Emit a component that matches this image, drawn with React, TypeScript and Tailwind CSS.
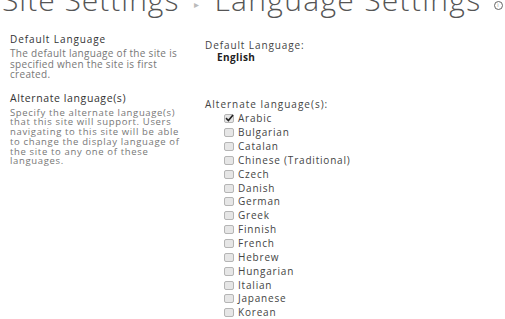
import React from 'react';

// Language settings page (SharePoint style)

const LANGUAGES = [
  'Arabic',
  'Bulgarian',
  'Catalan',
  'Chinese (Traditional)',
  'Czech',
  'Danish',
  'German',
  'Greek',
  'Finnish',
  'French',
  'Hebrew',
  'Hungarian',
  'Italian',
  'Japanese',
  'Korean',
];

function Checkbox({ checked }: { checked?: boolean }) {
  return (
    <span className="relative flex h-[9px] w-[10px] shrink-0 items-center justify-center rounded-[2px] border border-[#b5b5b5] bg-[#e6e6e6]">
      {checked && (
        <svg width="9" height="8" viewBox="0 0 9 8" className="absolute -top-[1px] left-0">
          <path d="M1 4.2 L3.4 6.5 L8 1" stroke="#222" strokeWidth="1.6" fill="none" />
        </svg>
      )}
    </span>
  );
}

export default function App() {
  return (
    <div
      className="h-[319px] w-[505px] overflow-hidden bg-white text-[#444]"
      style={{ fontFamily: '"Open Sans", "Noto Sans", sans-serif' }}
    >
      {/* Title */}
      <div className="-mt-[18px] flex h-[36px] items-center whitespace-nowrap pl-[2px] text-[30px] font-light leading-[36px] text-[#555]">
        <span className="shrink-0 tracking-[1px]">Site Settings</span>
        <span className="relative top-[4px] mx-[15px] shrink-0 text-[10px] leading-none text-[#bbb]">▸</span>
        <span className="shrink-0 tracking-[1.3px]">Language Settings</span>
        <span className="relative top-[5px] ml-[12px] flex h-[9px] w-[9px] shrink-0 items-center justify-center rounded-full border border-[#666] text-[6px] leading-none">i</span>
      </div>

      <div className="mt-[15px] flex">
        {/* Left column */}
        <div className="w-[192px] shrink-0 pl-[10px] pr-[8px]">
          <div className="text-[10px] leading-[12px] tracking-[0.9px] text-[#333]">Default Language</div>
          <p className="mt-[3px] text-[10px] leading-[10.5px] tracking-[0.3px] text-[#777]">
            The default language of the site is specified when the site is first created.
          </p>
          <div className="mt-[12px] text-[10.5px] leading-[13px] tracking-[0.6px] text-[#333]">Alternate language(s)</div>
          <p className="mt-[3px] text-[9.5px] leading-[9.8px] tracking-[0.65px] text-[#777]">
            Specify the alternate language(s) that this site will support. Users navigating to this site will be able to change the display language of the site to any one of these languages.
          </p>
        </div>

        {/* Right column */}
        <div className="flex-1 pl-[13px] pt-[6px]">
          <div className="text-[10px] leading-[12px] tracking-[0.9px] text-[#444]">Default Language:</div>
          <div className="pl-[12px] text-[10px] font-bold leading-[12px] tracking-[0.4px] text-[#222]">English</div>

          <div className="mt-[35px] text-[10px] leading-[12px] tracking-[1px] text-[#444]">Alternate language(s):</div>
          <ul className="mt-[2px] pl-[19px]">
            {LANGUAGES.map((lang, i) => (
              <li key={lang} className="flex h-[13.85px] items-center gap-[4px] text-[10px] tracking-[0.8px] text-[#444]">
                <Checkbox checked={i === 0} />
                <span>{lang}</span>
              </li>
            ))}
          </ul>
        </div>
      </div>
    </div>
  );
}
